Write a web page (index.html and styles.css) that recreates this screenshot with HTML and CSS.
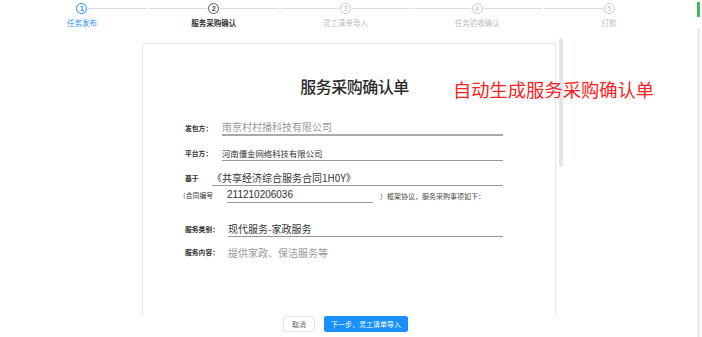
FILE: index.html
```html
<!DOCTYPE html>
<html lang="zh-CN">
<head>
    <meta charset="UTF-8">
    <meta name="viewport" content="width=device-width, initial-scale=1.0">
    <title>服务采购确认</title>
    <link rel="stylesheet" href="styles.css">
</head>
<body>
    <div class="main">
        <div class="steps">
            <div class="step done">
                <div class="dot-row"><span class="line hidden"></span><span class="dot">1</span><span class="line"></span></div>
                <div class="step-title">任务发布</div>
            </div>
            <div class="step current">
                <div class="dot-row"><span class="line"></span><span class="dot">2</span><span class="line"></span></div>
                <div class="step-title">服务采购确认</div>
            </div>
            <div class="step">
                <div class="dot-row"><span class="line"></span><span class="dot">3</span><span class="line"></span></div>
                <div class="step-title">灵工清单导入</div>
            </div>
            <div class="step">
                <div class="dot-row"><span class="line"></span><span class="dot">4</span><span class="line"></span></div>
                <div class="step-title">任务验收确认</div>
            </div>
            <div class="step">
                <div class="dot-row"><span class="line"></span><span class="dot">5</span><span class="line hidden"></span></div>
                <div class="step-title">打款</div>
            </div>
        </div>

        <div class="viewer">
            <div class="sheet">
                <h1 class="sheet-title">服务采购确认单</h1>

                <div class="row row-first">
                    <span class="label">发包方：</span>
                    <span class="field field-thick muted">南京村村播科技有限公司</span>
                </div>
                <div class="row row-gap">
                    <span class="label">平台方：</span>
                    <span class="field small">河南僵金网络科技有限公司</span>
                </div>
                <div class="row row-gap">
                    <span class="label label-short">基于</span>
                    <span class="field">《共享经济综合服务合同1H0Y》</span>
                </div>
                <div class="row row-tight">
                    <span class="label label-contract">（合同编号</span>
                    <span class="field field-contract">211210206036</span>
                    <span class="suffix">）框架协议，服务采购事项如下：</span>
                </div>
                <div class="row row-wide">
                    <span class="label label-wide">服务类别：</span>
                    <span class="field">现代服务-家政服务</span>
                </div>
                <div class="row row-last">
                    <span class="label label-wide">服务内容：</span>
                    <span class="field plain muted">提供家政、保洁服务等</span>
                </div>
            </div>
            <div class="scrollbar"><div class="thumb"></div></div>
        </div>

        <div class="actions">
            <button class="btn">取消</button>
            <button class="btn btn-primary">下一步，灵工清单导入</button>
        </div>

        <div class="note">自动生成服务采购确认单</div>
    </div>
    <div class="edge">
        <div class="edge-green"></div>
        <div class="edge-gray"></div>
    </div>
</body>
</html>
```

FILE: styles.css
```css
body {
    margin: 0;
    height: 337px;
    overflow: hidden;
    display: flex;
    background-color: #fff;
    font-family: "Noto Sans CJK SC", "Noto Sans", sans-serif;
    color: #333;
}

.main {
    position: relative;
    width: 697px;
}

/* steps */
.steps {
    display: flex;
    margin-left: 16px;
    width: 659px;
    height: 36px;
}

.step {
    flex: 1;
    display: flex;
    flex-direction: column;
    align-items: center;
}

.dot-row {
    display: flex;
    align-items: center;
    width: 100%;
    margin-top: 3px;
    height: 10px;
}

.line {
    flex: 1;
    height: 1px;
    background-color: #dcdcdc;
    margin: 0 1px;
}

    .line.hidden {
        background-color: transparent;
    }

.dot {
    width: 9px;
    height: 9px;
    border: 1px solid #c8c8c8;
    border-radius: 50%;
    font-size: 7px;
    line-height: 9px;
    text-align: center;
    color: #bbb;
    font-family: "Liberation Sans", sans-serif;
}

.step-title {
    margin-top: 5px;
    font-size: 7.5px;
    line-height: 10px;
    color: #bbb;
}

.step.done .dot {
    border-color: #1890ff;
    color: #1890ff;
    font-weight: bold;
}

.step.done .step-title {
    color: #1890ff;
}

.step.current .dot {
    border-color: #555;
    color: #444;
    font-weight: bold;
}

.step.current .step-title {
    color: #333;
    font-weight: bold;
}

/* document viewer */
.viewer {
    display: flex;
    margin-left: 142px;
    height: 280px;
    overflow: hidden;
}

.sheet {
    width: 414px;
    height: 300px;
    margin-top: 7px;
    border: 1px solid #e8e8e8;
    box-shadow: 0 0 2px rgba(0,0,0,0.06);
    padding: 0 52px 0 42px;
    box-sizing: border-box;
}

.sheet-title {
    margin: 32px 0 0;
    text-align: center;
    font-size: 16px;
    line-height: 20px;
    font-weight: 500;
    color: #2a2a2a;
    letter-spacing: -0.5px;
    padding-left: 21px;
}

.row {
    display: flex;
    align-items: flex-end;
}

.row-first { margin-top: 24px; }
.row-gap { margin-top: 10px; }
.row-tight { margin-top: 2px; }
.row-wide { margin-top: 19px; }
.row-last { margin-top: 8px; }

.label {
    width: 37px;
    flex-shrink: 0;
    font-size: 6.8px;
    line-height: 15px;
    font-weight: bold;
    color: #333;
}

.label-short { width: 27px; }
.label-wide { width: 43px; }

.label-contract {
    margin-left: -6px;
    width: 48px;
    font-weight: normal;
}

.field {
    flex: 1;
    font-size: 10px;
    line-height: 14px;
    border-bottom: 1px solid #999;
    color: #333;
    white-space: nowrap;
}

.field-thick {
    border-bottom: 2px solid #aaa;
}

.field.small {
    font-size: 8.4px;
}

.field.plain {
    border-bottom: none;
}

.field.muted {
    color: #999;
}

.field-contract {
    flex: none;
    width: 146px;
    font-family: "Liberation Sans", sans-serif;
}

.suffix {
    margin-left: 7px;
    font-size: 7px;
    line-height: 14px;
    color: #444;
    white-space: nowrap;
}

.scrollbar {
    margin-left: 3px;
    width: 4px;
}

.thumb {
    margin-top: 2px;
    height: 129px;
    border-radius: 2px;
    background-color: #e3e6ec;
}

/* buttons */
.actions {
    display: flex;
    gap: 9px;
    margin-left: 283px;
}

.btn {
    height: 16px;
    padding: 0;
    width: 32px;
    border: 1px solid #e3e3e3;
    border-radius: 2px;
    background-color: #fff;
    color: #666;
    font-family: "Noto Sans CJK SC", sans-serif;
    font-size: 7px;
    line-height: 14px;
    cursor: pointer;
}

.btn-primary {
    width: 84px;
    border-color: #1890ff;
    background-color: #1890ff;
    color: #fff;
}

.note {
    position: absolute;
    left: 453px;
    top: 78px;
    font-size: 18.3px;
    line-height: 22px;
    color: #ff2222;
    white-space: nowrap;
}

/* right edge */
.edge {
    width: 3px;
    display: flex;
    flex-direction: column;
}

.edge-green {
    margin-top: 2px;
    height: 15px;
    background-color: #3cb95a;
}

.edge-gray {
    margin-top: 11px;
    flex: 1;
    background-color: #e9ebef;
}
```
